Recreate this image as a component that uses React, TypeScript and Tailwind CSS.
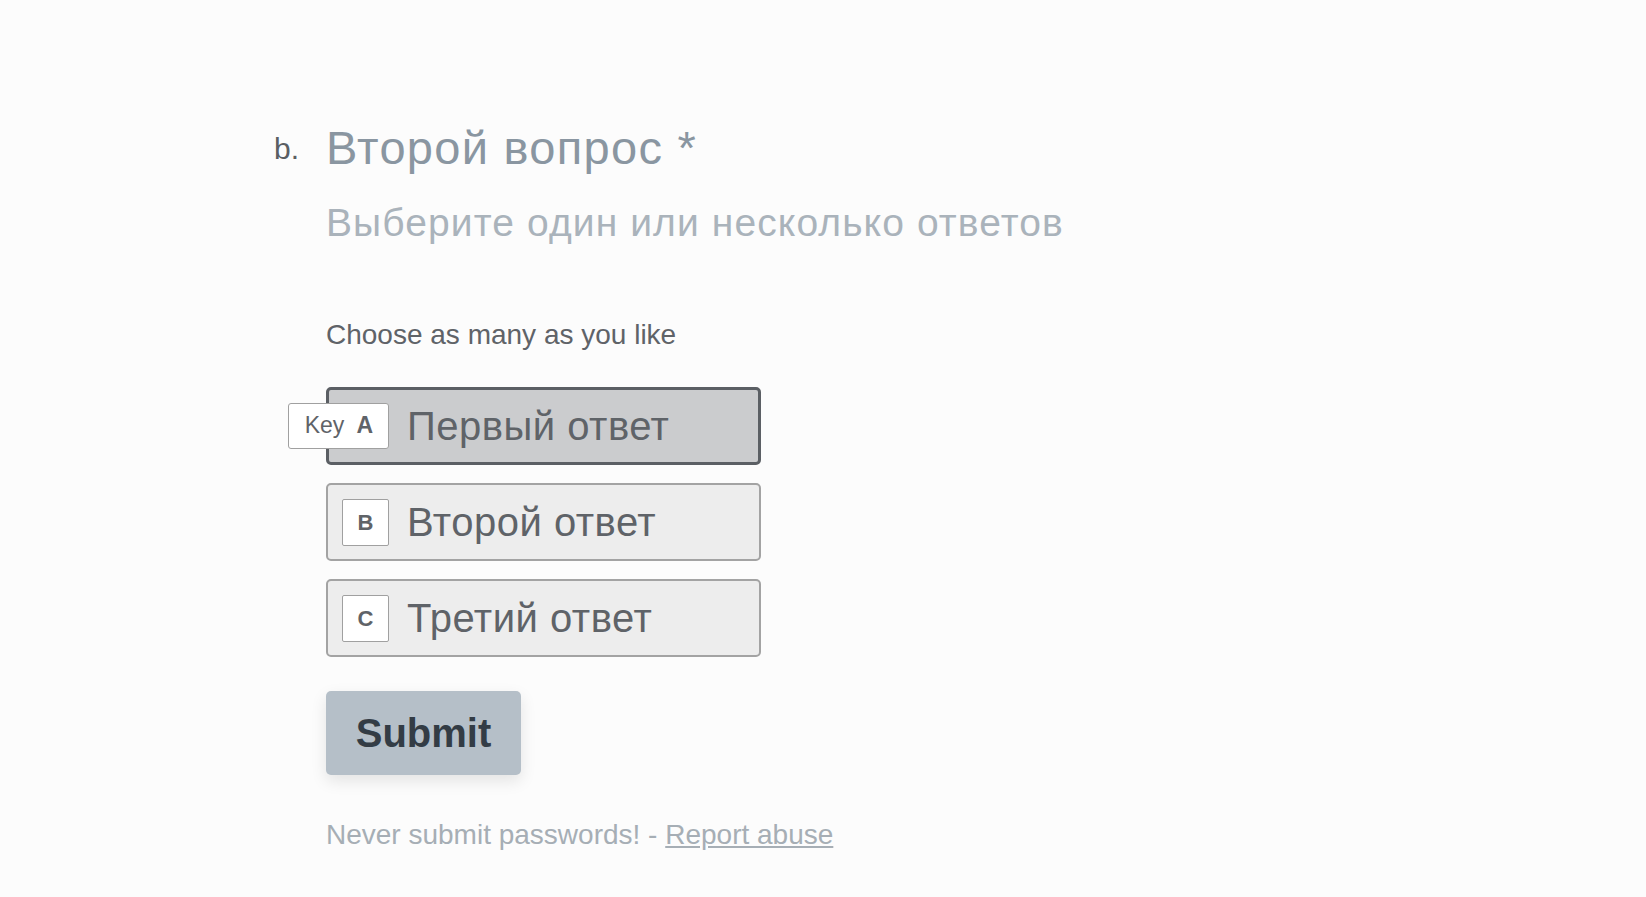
import React from "react";

const font = { fontFamily: '"Liberation Sans", Arial, Helvetica, sans-serif' };

function Option({ letter, label, selected }: { letter: string; label: string; selected?: boolean }) {
  return (
    <div
      className={
        "flex items-center h-[78px] w-[435px] rounded-[5px] box-border " +
        (selected ? "bg-[#cbccce] border-[3px] border-[#5b5f64] pl-[13px]" : "bg-[#ededed] border-2 border-[#a3a3a3] pl-[14px]")
      }
    >
      <div className="relative w-[47px] h-[47px] shrink-0">
        {selected ? (
          <div className="absolute right-0 top-0 h-[46px] flex items-center gap-[12px] pl-[16px] pr-[15px] bg-white border border-[#a0a0a0] rounded-[3px] whitespace-nowrap">
            <span className="text-[23px] text-[#5f6368]">Key</span>
            <span className="text-[23px] font-bold text-[#5f6368]">{letter}</span>
          </div>
        ) : (
          <div className="w-[47px] h-[47px] flex items-center justify-center bg-white border border-[#a0a0a0] rounded-[2px]">
            <span className="text-[22px] font-bold text-[#5f6368]">{letter}</span>
          </div>
        )}
      </div>
      <span className="ml-[18px] text-[40px] leading-[44px] tracking-[0.5px] text-[#5f6368] whitespace-nowrap">{label}</span>
    </div>
  );
}

export default function App() {
  return (
    <div className="min-h-[897px] w-full bg-[#fcfcfc] antialiased" style={font}>
      <div className="flex pl-[274px] pt-[122px]">
        <div className="w-[52px] mt-[10px] text-[30px] leading-[34px] text-[#5a5e63]">b.</div>
        <div className="flex flex-col">
          <h1 className="text-[47px] leading-[52px] tracking-[1.3px] text-[#8a96a1]">Второй вопрос *</h1>
          <p className="mt-[27px] text-[39px] leading-[44px] tracking-[1.1px] text-[#aab3bb]">Выберите один или несколько ответов</p>
          <p className="mt-[73px] text-[28px] leading-[34px] text-[#5f6368]">Choose as many as you like</p>
          <div className="mt-[35px] flex flex-col gap-[18px]">
            <Option letter="A" label="Первый ответ" selected />
            <Option letter="B" label="Второй ответ" />
            <Option letter="C" label="Третий ответ" />
          </div>
          <button className="mt-[34px] w-[195px] h-[84px] rounded-[5px] bg-[#b5bfc8] text-[40px] font-bold text-[#333c45] shadow-[0_6px_16px_rgba(0,0,0,0.10)]">
            Submit
          </button>
          <p className="mt-[44px] text-[28px] leading-[32px] text-[#a6aeb5]">
            Never submit passwords! - <a className="underline">Report abuse</a>
          </p>
        </div>
      </div>
    </div>
  );
}
